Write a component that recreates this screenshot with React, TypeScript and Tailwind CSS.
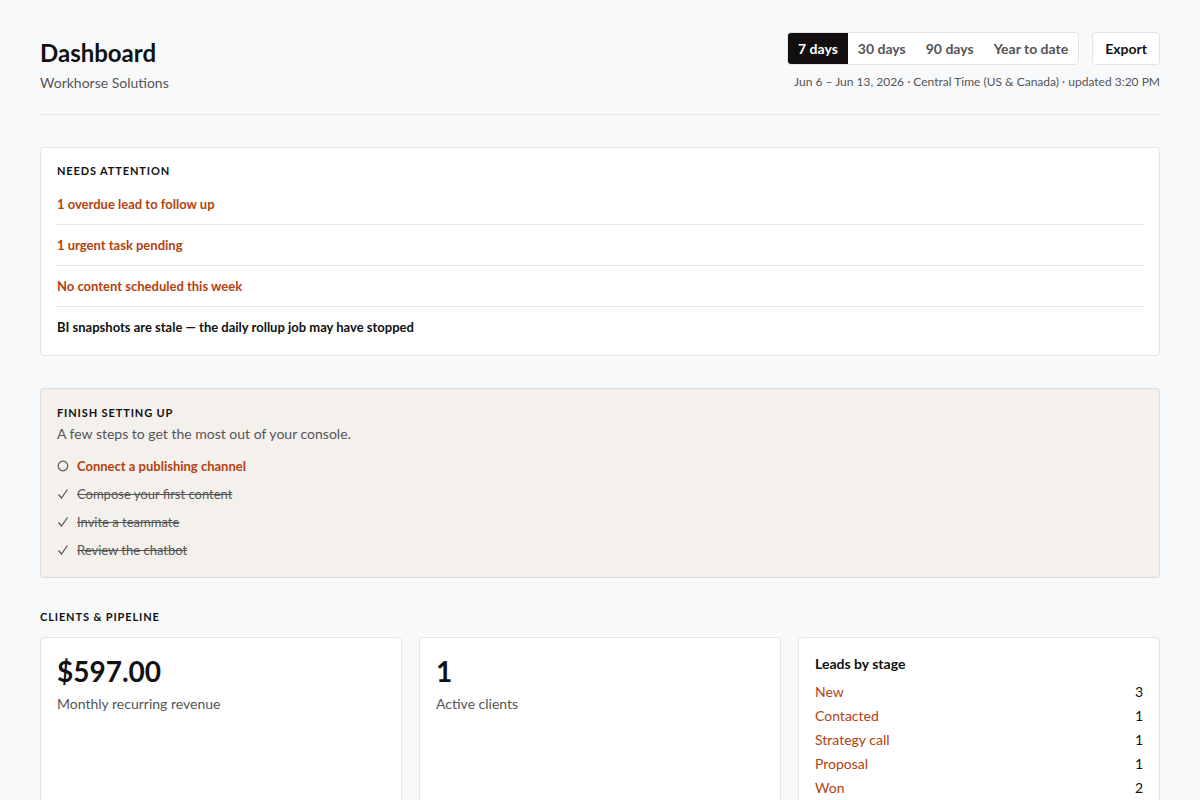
import React from "react";

const font = { fontFamily: '"Source Sans Pro", Lato, "Noto Sans", sans-serif' };

export default function App() {
  const attention = [
    { t: "1 overdue lead to follow up", warn: true },
    { t: "1 urgent task pending", warn: true },
    { t: "No content scheduled this week", warn: true },
    { t: "BI snapshots are stale — the daily rollup job may have stopped", warn: false },
  ];
  const steps = [
    { t: "Connect a publishing channel", done: false },
    { t: "Compose your first content", done: true },
    { t: "Invite a teammate", done: true },
    { t: "Review the chatbot", done: true },
  ];
  const leads = [
    ["New", 3],
    ["Contacted", 1],
    ["Strategy call", 1],
    ["Proposal", 1],
    ["Won", 2],
  ];
  return (
    <div className="min-h-screen bg-[#f8f9fb] text-[#111]" style={font}>
      <div className="px-10 pt-8">
        <div className="flex justify-between border-b border-[#e3e5e8] pb-[22px]">
          <div className="pt-[5px]">
            <h1 className="text-[24px] font-bold leading-[32px] text-[#111]">Dashboard</h1>
            <div className="mt-[5px] text-[14px] leading-[18px] text-[#555]">Workhorse Solutions</div>
          </div>
          <div className="flex flex-col items-end">
            <div className="flex gap-[13px]">
              <div className="flex h-[33px] overflow-hidden rounded-[4px] border border-[#e3e3e3] bg-white text-[14px] font-bold">
                <div className="flex items-center bg-[#120f0e] px-[10px] text-white">7 days</div>
                <div className="flex items-center px-[10px] text-[#555]">30 days</div>
                <div className="flex items-center px-[10px] text-[#555]">90 days</div>
                <div className="flex items-center px-[10px] text-[#555]">Year to date</div>
              </div>
              <div className="flex h-[33px] items-center rounded-[4px] border border-[#e3e3e3] bg-white px-[12px] text-[14px] font-bold text-[#111]">
                Export
              </div>
            </div>
            <div className="mt-[9px] text-[12px] leading-[16px] text-[#555]">
              Jun 6 – Jun 13, 2026 · Central Time (US &amp; Canada) · updated 3:20 PM
            </div>
          </div>
        </div>

        <div className="mt-8 rounded-[4px] border border-[#e3e5e8] bg-white px-4 pb-[8px] pt-[16px]">
          <div className="text-[11px] font-bold tracking-[0.08em] leading-[14px] text-[#111]">NEEDS ATTENTION</div>
          <div className="mt-[6px]">
            {attention.map((a, i) => (
              <div
                key={i}
                className={`py-[12px] text-[13px] font-bold leading-[16px] ${i > 0 ? "border-t border-[#e6e6e6]" : ""} ${a.warn ? "text-[#b5410f]" : "text-[#111]"}`}
              >
                {a.t}
              </div>
            ))}
          </div>
        </div>

        <div className="mt-8 rounded-[4px] border border-[#e2ddd8] bg-[#f4f0ec] px-4 pb-[13px] pt-[17px]">
          <div className="text-[11px] font-bold tracking-[0.08em] leading-[14px] text-[#111]">FINISH SETTING UP</div>
          <div className="mt-[5px] text-[14px] leading-[18px] text-[#555]">A few steps to get the most out of your console.</div>
          <div className="mt-[9px] flex flex-col">
            {steps.map((s, i) => (
              <div key={i} className="flex h-[28px] items-center gap-[8px] text-[13px] leading-[17px]">
                <span className="flex w-[12px] justify-center text-[#555]">
                  {s.done ? (
                    <svg width="12" height="12" viewBox="0 0 12 12" fill="none" stroke="#555" strokeWidth="1.2">
                      <path d="M1.5 6.5 L4.5 10 L10.5 1.5" />
                    </svg>
                  ) : (
                    <svg width="12" height="12" viewBox="0 0 12 12" fill="none" stroke="#555" strokeWidth="1.2">
                      <circle cx="6" cy="6" r="4.8" />
                    </svg>
                  )}
                </span>
                <span className={s.done ? "text-[#555] line-through" : "font-bold text-[#b5410f]"}>{s.t}</span>
              </div>
            ))}
          </div>
        </div>

        <div className="mt-[32px] text-[11px] font-bold tracking-[0.08em] leading-[14px] text-[#111]">CLIENTS &amp; PIPELINE</div>
        <div className="mt-[13px] grid grid-cols-3 gap-[17px]">
          <div className="h-[200px] rounded-[4px] border border-[#e3e5e8] bg-white px-4 pt-[16px]">
            <div className="text-[28px] font-bold leading-[34px]">$597.00</div>
            <div className="mt-[7px] text-[14px] leading-[18px] text-[#555]">Monthly recurring revenue</div>
          </div>
          <div className="h-[200px] rounded-[4px] border border-[#e3e5e8] bg-white px-4 pt-[16px]">
            <div className="text-[28px] font-bold leading-[34px]">1</div>
            <div className="mt-[7px] text-[14px] leading-[18px] text-[#555]">Active clients</div>
          </div>
          <div className="h-[200px] rounded-[4px] border border-[#e3e5e8] bg-white px-4 pt-[17px]">
            <div className="text-[14px] font-bold leading-[18px]">Leads by stage</div>
            <div className="mt-[6px] flex flex-col">
              {leads.map(([n, c]) => (
                <div key={n as string} className="flex h-[24px] items-center justify-between text-[14px]">
                  <span className="text-[#b5410f]">{n}</span>
                  <span className="text-[#111]">{c}</span>
                </div>
              ))}
            </div>
          </div>
        </div>
      </div>
    </div>
  );
}
